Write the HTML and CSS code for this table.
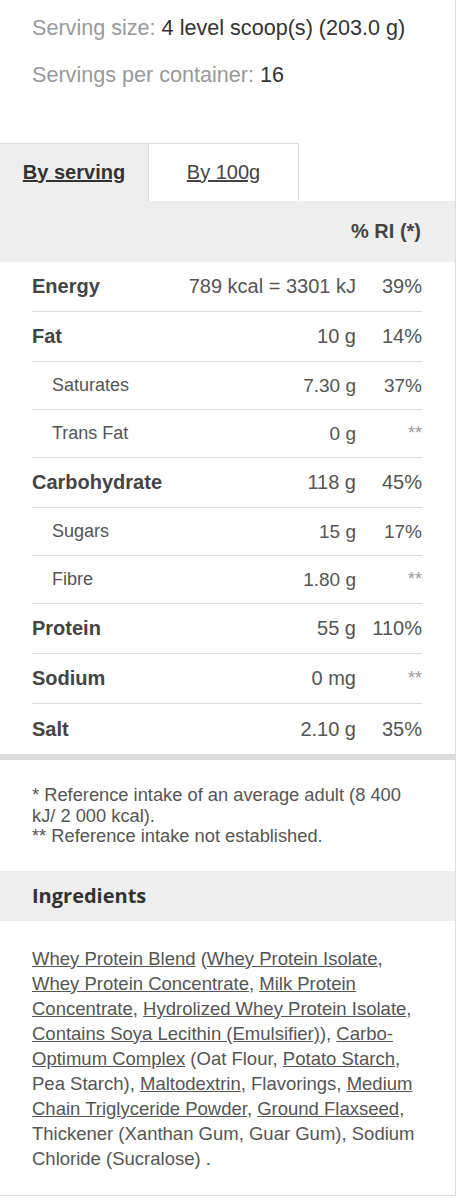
FILE: index.html
```html
<!DOCTYPE html>
<html>
<head>
<meta charset="utf-8">
<link rel="stylesheet" href="styles.css">
</head>
<body>
<div class="panel">
  <div class="serving">
    <p class="serving-line"><span class="label">Serving size:</span> 4 level scoop(s) (203.0 g)</p>
    <p class="serving-line"><span class="label">Servings per container:</span> 16</p>
  </div>

  <div class="tabs">
    <a class="tab tab-active" href="#">By serving</a>
    <a class="tab" href="#">By 100g</a>
  </div>

  <div class="nutr-head">% RI (*)</div>

  <div class="nutr">
    <div class="row main"><span class="name">Energy</span><span class="val">789 kcal = 3301 kJ</span><span class="ri">39%</span></div>
    <div class="row main"><span class="name">Fat</span><span class="val">10 g</span><span class="ri">14%</span></div>
    <div class="row sub"><span class="name">Saturates</span><span class="val">7.30 g</span><span class="ri">37%</span></div>
    <div class="row sub"><span class="name">Trans Fat</span><span class="val">0 g</span><span class="ri na">**</span></div>
    <div class="row main"><span class="name">Carbohydrate</span><span class="val">118 g</span><span class="ri">45%</span></div>
    <div class="row sub"><span class="name">Sugars</span><span class="val">15 g</span><span class="ri">17%</span></div>
    <div class="row sub"><span class="name">Fibre</span><span class="val">1.80 g</span><span class="ri na">**</span></div>
    <div class="row main"><span class="name">Protein</span><span class="val">55 g</span><span class="ri">110%</span></div>
    <div class="row main"><span class="name">Sodium</span><span class="val">0 mg</span><span class="ri na">**</span></div>
    <div class="row main last"><span class="name">Salt</span><span class="val">2.10 g</span><span class="ri">35%</span></div>
  </div>

  <div class="notes">
    <p>* Reference intake of an average adult (8 400 kJ/ 2 000 kcal).<br>** Reference intake not established.</p>
  </div>

  <h2 class="ing-head">Ingredients</h2>
  <p class="ing"><a href="#">Whey Protein Blend</a> (<a href="#">Whey Protein Isolate</a>, <a href="#">Whey Protein Concentrate</a>, <a href="#">Milk Protein Concentrate</a>, <a href="#">Hydrolized Whey Protein Isolate</a>, <a href="#">Contains Soya Lecithin (Emulsifier)</a>), <a href="#">Carbo-Optimum Complex</a> (Oat Flour, <a href="#">Potato Starch</a>, Pea Starch), <a href="#">Maltodextrin</a>, Flavorings, <a href="#">Medium Chain Triglyceride Powder</a>, <a href="#">Ground Flaxseed</a>, Thickener (Xanthan Gum, Guar Gum), Sodium Chloride (Sucralose) .</p>
</div>
</body>
</html>
```

FILE: styles.css
```css
* { box-sizing: border-box; }
html, body { margin: 0; padding: 0; background: #fff; }
body { font-family: "Liberation Sans", Arial, sans-serif; color: #444; }

.panel {
  width: 456px;
  border-right: 1px solid #ddd;
  border-bottom: 1px solid #ddd;
}

.serving { padding: 15px 32px 55px; }
.serving-line { margin: 0; font-size: 21.6px; line-height: 26px; color: #333; }
.serving-line + .serving-line { margin-top: 21px; }
.label { color: #999; }

.tabs { display: flex; height: 58px; }
.tab {
  display: flex; align-items: center; justify-content: center;
  font-size: 20px; color: #444; text-decoration: underline;
  border-top: 1px solid #ddd; padding-bottom: 1px;
}
.tab-active { width: 148px; background: #eee; font-weight: bold; color: #333; }
.tab + .tab { width: 151px; border-left: 1px solid #ddd; border-right: 1px solid #ddd; background: #fff; }

.nutr-head {
  height: 61px; background: #eee;
  display: flex; align-items: center; justify-content: flex-end;
  padding-right: 34px; font-weight: bold; font-size: 20px; color: #444;
}

.nutr { padding: 0 33px 0 32px; border-bottom: 6px solid #ddd; }
.row {
  display: grid; grid-template-columns: 1fr auto 66px;
  align-items: center; border-bottom: 1px solid #ddd;
  color: #555; font-size: 20px;
}
.row.main { height: 50px; }
.row.sub { height: 48px; font-size: 19px; }
.row.last { border-bottom: none; height: 50px; }
.main .name { font-weight: bold; font-size: 20px; color: #444; }
.sub .name { padding-left: 20px; font-size: 18px; color: #555; }
.val { text-align: right; }
.ri { text-align: right; }
.ri.na { font-size: 18px; color: #999; }

.notes { padding: 25px 32px 24px; }
.notes p { margin: 0; font-size: 18.3px; line-height: 20.5px; color: #555; }

.ing-head {
  margin: 0; height: 50px; background: #eee;
  display: flex; align-items: center; padding: 0 32px;
  font-family: "Open Sans", sans-serif; font-weight: bold; font-size: 20px; color: #333;
}

.ing { margin: 0; padding: 25px 33px 24px 32px; font-size: 18.5px; line-height: 25px; color: #555; }
.ing a { color: #555; text-decoration: underline; }
```
